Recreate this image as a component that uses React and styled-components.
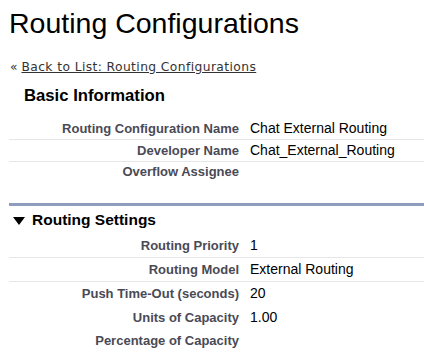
import React from "react";
import styled, { createGlobalStyle } from "styled-components";

const basicRows = [
  { label: "Routing Configuration Name", value: "Chat External Routing", line: true },
  { label: "Developer Name", value: "Chat_External_Routing", line: true },
  { label: "Overflow Assignee", value: "", line: false },
];

const routingRows = [
  { label: "Routing Priority", value: "1", line: true },
  { label: "Routing Model", value: "External Routing", line: true },
  { label: "Push Time-Out (seconds)", value: "20", line: false },
  { label: "Units of Capacity", value: "1.00", line: false },
  { label: "Percentage of Capacity", value: "", line: false },
];

const App = () => {
  return (
    <>
      <GlobalStyle />
      <Page>
        <Title>Routing Configurations</Title>
        <BackLine>
          « <BackLink href="#">Back to List: Routing Configurations</BackLink>
        </BackLine>
        <BlockTitle>Basic Information</BlockTitle>
        <DetailList $top={12}>
          {basicRows.map((row) => (
            <Row key={row.label} $line={row.line}>
              <Label>{row.label}</Label>
              <Value>{row.value}</Value>
            </Row>
          ))}
        </DetailList>

        <SubHeader>
          <svg width="12" height="8" viewBox="0 0 12 8">
            <polygon points="0,0 12,0 6,8" fill="#000" />
          </svg>
          <span>Routing Settings</span>
        </SubHeader>
        <DetailList $top={0}>
          {routingRows.map((row) => (
            <Row key={row.label} $line={row.line} $tall>
              <Label>{row.label}</Label>
              <Value>{row.value}</Value>
            </Row>
          ))}
        </DetailList>
      </Page>
    </>
  );
};

const GlobalStyle = createGlobalStyle`
  body {
    margin: 0;
    background: #fff;
    font-family: "Liberation Sans", Arial, sans-serif;
  }
`;

const Page = styled.div`
  width: 424px;
  padding-left: 9px;
  box-sizing: border-box;
  overflow: hidden;
`;

const Title = styled.h1`
  margin: 7px 0 0 0;
  font-size: 28.5px;
  line-height: 32px;
  font-weight: normal;
  color: #000;
`;

const BackLine = styled.div`
  margin-top: 20px;
  font-family: "DejaVu Sans", Verdana, sans-serif;
  font-size: 12.3px;
  line-height: 16px;
  color: #333;
  padding-left: 1px;
`;

const BackLink = styled.a`
  color: #333;
  text-decoration: underline;
  letter-spacing: 0.4px;
`;

const BlockTitle = styled.h2`
  margin: 11px 0 0 15px;
  font-size: 16.7px;
  line-height: 20px;
  font-weight: bold;
  color: #000;
`;

const DetailList = styled.div`
  display: flex;
  flex-direction: column;
  margin-top: ${(p) => p.$top}px;
`;

const Row = styled.div`
  display: grid;
  grid-template-columns: 230px 1fr;
  column-gap: 11px;
  align-items: baseline;
  padding: ${(p) => (p.$tall ? "3px 0 3px" : "2px 0 2px")};
  border-bottom: 1px solid ${(p) => (p.$line ? "#e6e6e6" : "transparent")};
`;

const Label = styled.div`
  text-align: right;
  font-size: 13px;
  line-height: 16px;
  font-weight: bold;
  color: #4a4a56;
`;

const Value = styled.div`
  font-size: 14px;
  line-height: 16px;
  color: #000;
`;

const SubHeader = styled.div`
  margin-top: 20px;
  border-top: 3px solid #8e9dbe;
  display: flex;
  align-items: center;
  gap: 7px;
  padding: 4px 0 4px 4px;
  font-size: 15.5px;
  line-height: 20px;
  font-weight: bold;
  color: #000;

  svg {
    flex: none;
    margin-top: 1px;
  }
`;

export default App;
